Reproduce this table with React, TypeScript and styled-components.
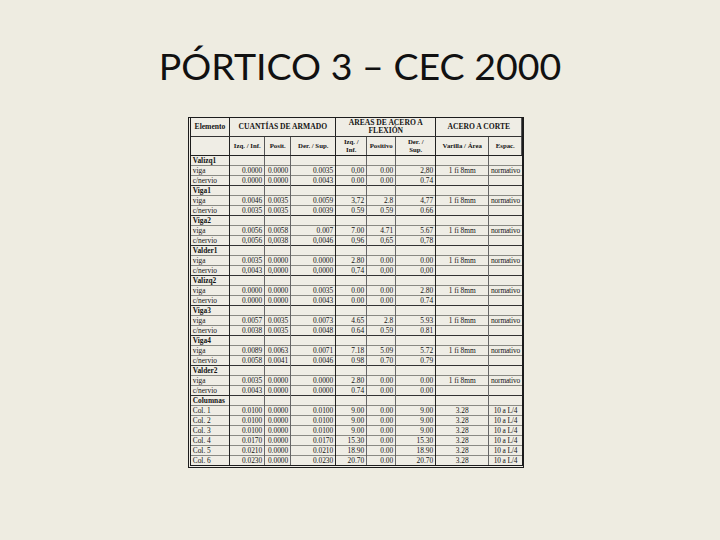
import React from 'react';
import styled, { createGlobalStyle } from 'styled-components';

const GlobalStyle = createGlobalStyle`
  html, body {
    margin: 0;
    padding: 0;
    background: #eeece1;
  }
  body {
    width: 720px;
    height: 540px;
    overflow: hidden;
  }
`;

const Slide = styled.div`
  width: 720px;
  height: 540px;
  background: #eeece1;
  display: flex;
  flex-direction: column;
  align-items: center;
`;

const Title = styled.h1`
  margin: 42px 0 0;
  height: 75px;
  font-family: Lato, 'Noto Sans', sans-serif;
  font-weight: 400;
  font-size: 37.5px;
  line-height: 48px;
  color: #111;
`;

const Sheet = styled.div`
  margin-right: 8px;
  background: #efede5;
  border-top: 1.5px solid #1c1c1c;
  border-right: 2px solid #1c1c1c;
  border-left: 3.5px double #1c1c1c;
  border-bottom: 3.5px double #1c1c1c;
`;

const Grid = styled.table`
  border-collapse: collapse;
  table-layout: fixed;
  width: 331px;
  font-family: 'Liberation Serif', 'Times New Roman', serif;
  color: #141414;
`;

const HeadCell = styled.th<{ $thick?: boolean }>`
  height: 18px;
  padding: 0 1px;
  font-size: 7.6px;
  line-height: 8px;
  font-weight: 700;
  text-align: center;
  vertical-align: middle;
  border-bottom: 1px solid #333;
  border-right: ${(p) => (p.$thick ? '1.5px solid #222' : '1px solid #555')};
  white-space: nowrap;
`;

const SubHead = styled(HeadCell)`
  font-size: 6.8px;
  border-bottom: 1.5px solid #222;
`;

const Cell = styled.td<{ $align?: string; $thick?: boolean; $bold?: boolean; $group?: boolean; $last?: boolean }>`
  height: 9px;
  padding: ${(p) => (p.$last ? '0' : '0 2px')};
  font-size: 7.4px;
  letter-spacing: ${(p) => (p.$last ? '-0.15px' : '0')};
  line-height: 9px;
  font-weight: ${(p) => (p.$bold ? 700 : 400)};
  text-align: ${(p) => p.$align || 'right'};
  white-space: nowrap;
  overflow: hidden;
  border-top: ${(p) => (p.$group ? '1.5px solid #333' : '1px solid #8a8a84')};
  border-right: ${(p) =>
    p.$last ? 'none' : p.$thick ? '1.5px solid #222' : '1px solid #666'};
`;

type Row =
  | { kind: 'group'; label: string }
  | { kind: 'row'; label: string; v: string[] };

const widths = [39, 35, 26, 45, 31, 29, 40, 53, 33];
const thickAfter = [0, 3, 6, 8];

const beam = (name: string, a: string[], b: string[]): Row[] => [
  { kind: 'group', label: name },
  { kind: 'row', label: 'viga', v: [...a, '1 fi 8mm', 'normativo'] },
  { kind: 'row', label: 'c/nervio', v: [...b, '', ''] },
];

const rows: Row[] = [
  ...beam('Valizq1', ['0.0000', '0.0000', '0.0035', '0,00', '0.00', '2,80'], ['0.0000', '0.0000', '0.0043', '0.00', '0.00', '0.74']),
  ...beam('Viga1', ['0.0046', '0.0035', '0.0059', '3,72', '2.8', '4,77'], ['0.0035', '0.0035', '0.0039', '0.59', '0.59', '0.66']),
  ...beam('Viga2', ['0.0056', '0.0058', '0.007', '7.00', '4.71', '5.67'], ['0,0056', '0,0038', '0,0046', '0,96', '0,65', '0,78']),
  ...beam('Valder1', ['0.0035', '0.0000', '0.0000', '2.80', '0.00', '0.00'], ['0,0043', '0,0000', '0,0000', '0,74', '0,00', '0,00']),
  ...beam('Valizq2', ['0.0000', '0.0000', '0.0035', '0.00', '0.00', '2.80'], ['0.0000', '0.0000', '0.0043', '0.00', '0.00', '0.74']),
  ...beam('Viga3', ['0.0057', '0.0035', '0.0073', '4.65', '2.8', '5.93'], ['0.0038', '0.0035', '0.0048', '0.64', '0.59', '0.81']),
  ...beam('Viga4', ['0.0089', '0.0063', '0.0071', '7.18', '5.09', '5.72'], ['0.0058', '0.0041', '0.0046', '0.98', '0.70', '0.79']),
  ...beam('Valder2', ['0.0035', '0.0000', '0.0000', '2.80', '0.00', '0.00'], ['0.0043', '0.0000', '0.0000', '0.74', '0.00', '0.00']),
  { kind: 'group', label: 'Columnas' },
  { kind: 'row', label: 'Col. 1', v: ['0.0100', '0.0000', '0.0100', '9.00', '0.00', '9.00', '3.28', '10 a L/4'] },
  { kind: 'row', label: 'Col. 2', v: ['0.0100', '0.0000', '0.0100', '9.00', '0.00', '9.00', '3.28', '10 a L/4'] },
  { kind: 'row', label: 'Col. 3', v: ['0.0100', '0.0000', '0.0100', '9.00', '0.00', '9.00', '3.28', '10 a L/4'] },
  { kind: 'row', label: 'Col. 4', v: ['0.0170', '0.0000', '0.0170', '15.30', '0.00', '15.30', '3.28', '10 a L/4'] },
  { kind: 'row', label: 'Col. 5', v: ['0.0210', '0.0000', '0.0210', '18.90', '0.00', '18.90', '3.28', '10 a L/4'] },
  { kind: 'row', label: 'Col. 6', v: ['0.0230', '0.0000', '0.0230', '20.70', '0.00', '20.70', '3.28', '10 a L/4'] },
];

const alignFor = (col: number) => (col >= 7 ? 'center' : 'right');

export default function App() {
  return (
    <>
      <GlobalStyle />
      <Slide>
        <Title>PÓRTICO 3 – CEC 2000</Title>
        <Sheet>
          <Grid>
            <colgroup>
              {widths.map((w, i) => (
                <col key={i} style={{ width: w }} />
              ))}
            </colgroup>
            <thead>
              <tr>
                <HeadCell $thick>Elemento</HeadCell>
                <HeadCell colSpan={3} $thick>CUANTÍAS DE ARMADO</HeadCell>
                <HeadCell colSpan={3} $thick>
                  AREAS DE ACERO A<br />FLEXIÓN
                </HeadCell>
                <HeadCell colSpan={2}>ACERO A CORTE</HeadCell>
              </tr>
              <tr>
                <SubHead $thick />
                <SubHead>Izq. / Inf.</SubHead>
                <SubHead>Posit.</SubHead>
                <SubHead $thick>Der. / Sup.</SubHead>
                <SubHead>
                  Izq. /<br />Inf.
                </SubHead>
                <SubHead>Positivo</SubHead>
                <SubHead $thick>
                  Der. /<br />Sup.
                </SubHead>
                <SubHead>Varilla / Área</SubHead>
                <SubHead>Espac.</SubHead>
              </tr>
            </thead>
            <tbody>
              {rows.map((r, i) =>
                r.kind === 'group' ? (
                  <tr key={i}>
                    <Cell $align="left" $bold $group $thick>
                      {r.label}
                    </Cell>
                    {widths.slice(1).map((_, c) => (
                      <Cell key={c} $group $thick={thickAfter.includes(c + 1)} $last={c + 1 === 8} />
                    ))}
                  </tr>
                ) : (
                  <tr key={i}>
                    <Cell $align="left" $thick>
                      {r.label}
                    </Cell>
                    {r.v.map((val, c) => (
                      <Cell
                        key={c}
                        $align={alignFor(c + 1)}
                        $thick={thickAfter.includes(c + 1)}
                        $last={c + 1 === 8}
                      >
                        {val}
                      </Cell>
                    ))}
                  </tr>
                ),
              )}
            </tbody>
          </Grid>
        </Sheet>
      </Slide>
    </>
  );
}
